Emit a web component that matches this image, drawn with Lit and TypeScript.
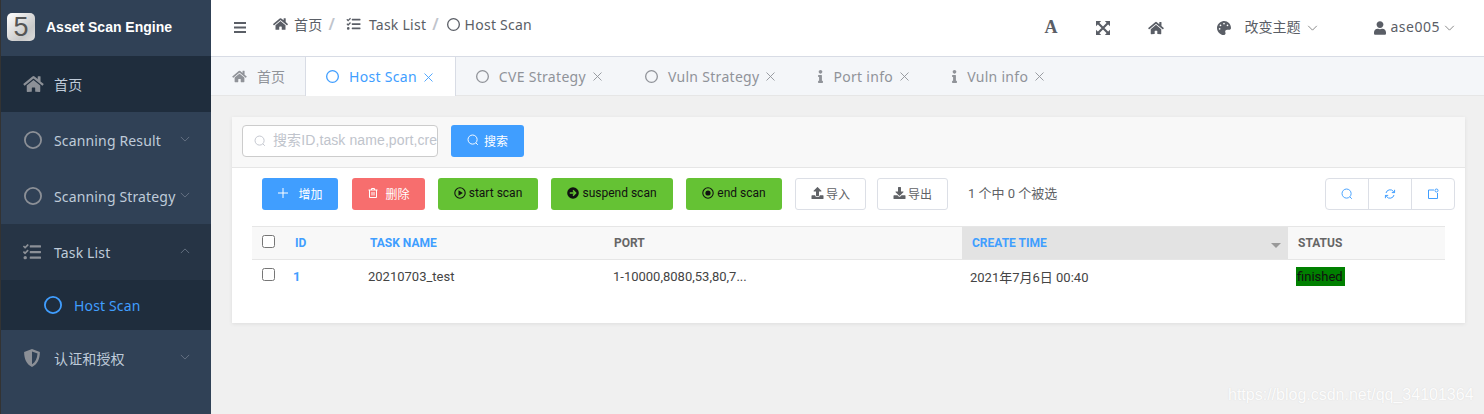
import { LitElement, css, html } from "lit";
import { customElement } from "lit/decorators.js";

const P = {
  home: "M280.37 148.26L96 300.11V464a16 16 0 0 0 16 16l112.06-.29a16 16 0 0 0 15.92-16V368a16 16 0 0 1 16-16h64a16 16 0 0 1 16 16v95.64a16 16 0 0 0 16 16.05L464 480a16 16 0 0 0 16-16V300L295.67 148.26a12.19 12.19 0 0 0-15.3 0zM571.6 251.47L488 182.56V44.05a12 12 0 0 0-12-12h-56a12 12 0 0 0-12 12v72.61L318.47 43a48 48 0 0 0-61 0L4.34 251.47a12 12 0 0 0-1.6 16.9l25.5 31A12 12 0 0 0 45.15 301l235.22-193.74a12.19 12.19 0 0 1 15.3 0L530.9 301a12 12 0 0 0 16.9-1.6l25.5-31a12 12 0 0 0-1.7-16.93z",
  tasks: "M139.61 35.5a12 12 0 0 0-17 0L58.93 98.81l-22.7-22.12a12 12 0 0 0-17 0L3.53 92.41a12 12 0 0 0 0 17l47.59 47.4a12.78 12.78 0 0 0 17.61 0l15.59-15.62L156.52 69a12.09 12.09 0 0 0 .09-17zm0 159.19a12 12 0 0 0-17 0l-63.68 63.72-22.7-22.1a12 12 0 0 0-17 0L3.53 252a12 12 0 0 0 0 17L51 316.5a12.77 12.77 0 0 0 17.6 0l15.7-15.69 72.2-72.22a12 12 0 0 0 .09-16.9zM64 368c-26.49 0-48.59 21.5-48.59 48S37.53 464 64 464a48 48 0 0 0 0-96zm432 16H208a16 16 0 0 0-16 16v32a16 16 0 0 0 16 16h288a16 16 0 0 0 16-16v-32a16 16 0 0 0-16-16zm0-320H208a16 16 0 0 0-16 16v32a16 16 0 0 0 16 16h288a16 16 0 0 0 16-16V80a16 16 0 0 0-16-16zm0 160H208a16 16 0 0 0-16 16v32a16 16 0 0 0 16 16h288a16 16 0 0 0 16-16v-32a16 16 0 0 0-16-16z",
  palette: "M204.3 5C104.9 24.4 24.8 104.3 5.2 203.4c-37 187 131.7 326.4 258.8 306.7 41.2-6.4 61.4-54.6 42.5-91.7-23.1-45.4 9.9-98.4 60.9-98.4h79.7c35.8 0 64.8-29.6 64.9-65.3C511.5 97.1 368.1-26.9 204.3 5zM96 320c-17.7 0-32-14.3-32-32s14.3-32 32-32 32 14.3 32 32-14.3 32-32 32zm32-128c-17.7 0-32-14.3-32-32s14.3-32 32-32 32 14.3 32 32-14.3 32-32 32zm128-64c-17.7 0-32-14.3-32-32s14.3-32 32-32 32 14.3 32 32-14.3 32-32 32zm128 64c-17.7 0-32-14.3-32-32s14.3-32 32-32 32 14.3 32 32-14.3 32-32 32z",
  user: "M224 256c70.7 0 128-57.3 128-128S294.7 0 224 0 96 57.3 96 128s57.3 128 128 128zm89.6 32h-16.7c-22.2 10.2-46.9 16-72.9 16s-50.6-5.8-72.9-16h-16.7C60.2 288 0 348.2 0 422.4V464c0 26.5 21.5 48 48 48h352c26.5 0 48-21.5 48-48v-41.6c0-74.2-60.2-134.4-134.4-134.4z",
  info: "M20 424.229h20V279.771H20c-11.046 0-20-8.954-20-20V212c0-11.046 8.954-20 20-20h112c11.046 0 20 8.954 20 20v212.229h20c11.046 0 20 8.954 20 20V492c0 11.046-8.954 20-20 20H20c-11.046 0-20-8.954-20-20v-47.771c0-11.046 8.954-20 20-20zM96 0C56.235 0 24 32.235 24 72s32.235 72 72 72 72-32.235 72-72S135.764 0 96 0z",
  upload: "M296 384h-80c-13.3 0-24-10.7-24-24V192h-87.7c-17.8 0-26.7-21.5-14.1-34.1L242.3 5.7c7.5-7.5 19.8-7.5 27.3 0l152.2 152.2c12.6 12.6 3.7 34.1-14.1 34.1H320v168c0 13.3-10.7 24-24 24zm216-8v112c0 13.3-10.7 24-24 24H24c-13.3 0-24-10.7-24-24V376c0-13.3 10.7-24 24-24h136v8c0 30.9 25.1 56 56 56h80c30.9 0 56-25.1 56-56v-8h136c13.3 0 24 10.7 24 24z",
  download: "M216 0h80c13.3 0 24 10.7 24 24v168h87.7c17.8 0 26.7 21.5 14.1 34.1L269.7 378.3c-7.5 7.5-19.8 7.5-27.3 0L90.1 226.1c-12.6-12.6-3.7-34.1 14.1-34.1H192V24c0-13.3 10.7-24 24-24zm296 376v112c0 13.3-10.7 24-24 24H24c-13.3 0-24-10.7-24-24V376c0-13.3 10.7-24 24-24h146.7l49 49c20.1 20.1 52.5 20.1 72.6 0l49-49H488c13.3 0 24 10.7 24 24z",
  shield: "M8 0 15 2.6C15 8.5 13 13.4 8 16 3 13.4 1 8.5 1 2.6zM8 2.2V13.6C11 11.6 12.6 8.6 12.9 4z",
};

const fa = (d: string, vb: string, cls: string) =>
  html`<svg class="fa ${cls}" viewBox=${vb} fill="currentColor"><path d=${d}></path></svg>`;
const home = (cls: string) => fa(P.home, "0 0 576 512", cls);
const tasks = (cls: string) => fa(P.tasks, "0 0 512 512", cls);
const ring = (cls: string) =>
  html`<svg class="fa ${cls}" viewBox="0 0 14 14" fill="none" stroke="currentColor" stroke-width="1.4"><circle cx="7" cy="7" r="6.3"></circle></svg>`;
const info = (cls: string) => fa(P.info, "0 0 192 512", cls);
const chevron = (up = false) =>
  html`<svg class="chev" viewBox="0 0 12 7" fill="none" stroke="currentColor" stroke-width="1"><path d=${up ? "M1 6 6 1l5 5" : "M1 1l5 5 5-5"}></path></svg>`;
const search = (cls: string) =>
  html`<svg class=${cls} viewBox="0 0 14 14" fill="none" stroke="currentColor" stroke-width="1.1"><circle cx="6.5" cy="6.5" r="5.3"></circle><path d="M10.4 10.4 12.6 12.6"></path></svg>`;

@customElement("app-root")
export class AppRoot extends LitElement {
  static styles = css`
    :host {
      display: flex;
      height: 100vh;
      min-height: 414px;
      overflow: hidden;
      background: #f0f0f0;
      font-family: "Noto Sans", "Noto Sans CJK SC", sans-serif;
      font-size: 14px;
      color: #606266;
    }
    svg { display: block; flex: none; }

    /* sidebar */
    .side {
      width: 210px;
      flex: none;
      background: #304156;
      border-left: 1px solid #333;
      color: #bfcbd9;
      letter-spacing: 0.15px;
    }
    .logo { height: 54px; padding-bottom: 2px; display: flex; align-items: center; padding-left: 6px; gap: 11px; }
    .logo-mark {
      width: 28px;
      height: 28px;
      border-radius: 5px;
      background: linear-gradient(135deg, #fff, #c9c9c9 70%, #ddd);
      color: #555;
      font: 27px/28px "Liberation Sans", sans-serif;
      text-align: center;
    }
    .logo-title { font: bold 14px "Liberation Sans", sans-serif; color: #fff; letter-spacing: 0; }
    .item { height: 56px; display: flex; align-items: center; position: relative; padding-left: 53px; }
    .item .lead { position: absolute; left: 22px; top: 50%; margin-top: -9px; color: #8c9097; }
    .item .chev { position: absolute; left: 179px; top: 24px; width: 10px; height: 6px; color: #6d7a8a; }
    .item.dark { background: #1f2d3d; }
    .item.open { background: #263445; }
    .item.sub { height: 50px; background: #1f2d3d; color: #409eff; padding-left: 73px; }
    .item.sub .lead { left: 43px; color: #409eff; }
    .i18 { width: 18px; height: 18px; }
    .home-lead { width: 21px; height: 18px; }
    .item .ring-lead { width: 18px; height: 18px; left: 23px; }

    /* right side */
    .body { flex: 1; min-width: 0; display: flex; flex-direction: column; }
    .top {
      height: 56px;
      background: #fff;
      border-bottom: 1px solid #d8dce5;
      display: flex;
      align-items: center;
      padding-left: 23px;
      color: #5a5e66;
    }
    .burger { width: 12px; height: 11px; margin-right: 27px; margin-bottom: 2px; color: #5a5e66; }
    .crumbs { display: flex; align-items: center; margin-top: -8px; }
    .crumbs .fa { height: 14px; width: 15px; }
    .crumbs .ring-c { width: 13px; height: 13px; }
    .crumbs .sep { color: #c0c4cc; font-weight: 600; font-size: 16px; }
    .crumbs .sep1 { margin: 0 11px 0 6px; }
    .crumbs .sep2 { margin: 0 8px 0 6px; }
    .crumbs .t { margin-left: 6px; letter-spacing: 0.25px; }
    .crumbs .t-task { margin-left: 8px; }
    .crumbs .t-host { margin-left: 5px; }
    .tools { margin-left: auto; display: flex; align-items: center; color: #5a5e66; }
    .tool-a { font: bold 18px "Liberation Serif", serif; width: 13px; text-align: center; margin-right: 38px; margin-bottom: 2px; }
    .tool-x { width: 14px; height: 14px; margin-right: 38px; }
    .tool-h { width: 16px; height: 14px; margin-right: 53px; }
    .tool-p { width: 14px; height: 14px; margin-right: 14px; }
    .tools .chev { width: 11px; height: 6px; color: #777; margin-left: 6px; }
    .theme { font-size: 14px; margin-top: -5px; }
    .tool-u { width: 12px; height: 14px; margin-left: 56px; margin-right: 5px; }
    .name { font-size: 14px; margin-top: -3px; letter-spacing: 0.5px; }
    .tools .last { margin-right: 29px; margin-left: 4px; }

    .tabs {
      height: 38px;
      background: #f4f6f9;
      border-bottom: 1px solid #e6e6e6;
      display: flex;
      color: #909399;
      letter-spacing: 0.3px;
    }
    .tab { display: flex; align-items: center; padding: 0 23px 0 20px; position: relative; }
    .tab.first { padding: 0 20px 0 21px; letter-spacing: 0; }
    .tab .fa { width: 13px; height: 13px; margin-right: 10px; }
    .tab .home-i { width: 15px; height: 13px; margin-right: 10px; }
    .tab .info-i { width: 5px; height: 13px; margin-right: 10px; }
    .tab .x { width: 9px; height: 9px; margin-left: 7px; margin-top: 1px; }
    .tab.on {
      background: #fff;
      color: #409eff;
      height: 39px;
      padding-right: 22px;
      border-left: 1px solid #d8dce5;
      border-right: 1px solid #d8dce5;
    }

    .main { padding: 21px 19px 0 21px; }
    .card { background: #fff; box-shadow: 0 1px 4px rgba(0, 0, 0, 0.08); padding-bottom: 30px; }
    .search-row {
      height: 48px;
      padding-bottom: 2px;
      background: #f8f8f8;
      border-bottom: 1px solid #e6e6e6;
      display: flex;
      align-items: center;
      padding-left: 10px;
      gap: 13px;
    }
    .input {
      width: 196px;
      height: 32px;
      box-sizing: border-box;
      background: #fff;
      border: 1px solid #ccc;
      border-radius: 4px;
      display: flex;
      align-items: center;
      padding: 0 0 5px 11px;
      gap: 7px;
      color: #c0c4cc;
      overflow: hidden;
      white-space: nowrap;
      font-family: "Liberation Sans", "Noto Sans CJK SC", sans-serif;
      letter-spacing: 0.1px;
    }
    .input .s12 { margin-top: 5px; }
    .s12 { width: 12px; height: 12px; flex: none; display: block; }
    .btn {
      height: 32px;
      box-sizing: border-box;
      padding-bottom: 2px;
      border-radius: 3px;
      display: flex;
      align-items: center;
      justify-content: center;
      font: 12px "Roboto", "Noto Sans CJK SC", sans-serif;
      flex: none;
    }
    .blue { background: #409eff; color: #fff; }
    .red { background: #f76e6e; color: #fff; margin-left: 1px; }
    .green { background: #65c234; color: #111; }
    .plain { background: #fff; border: 1px solid #dcdfe6; color: #606266; }
    .w-search { width: 73px; gap: 5px; }
    .w-add { width: 76px; gap: 9px; }
    .w-del { width: 73px; gap: 6px; }
    .w-start { width: 100px; gap: 3px; }
    .w-susp { width: 122px; gap: 3px; }
    .w-end { width: 96px; gap: 3px; }
    .w-imp { width: 71px; gap: 2px; }
    .exp { margin-left: -2px; }
    .i13 { width: 13px; height: 12px; }
    .tool-row {
      height: 32px;
      padding: 10px 10px 16px 30px;
      display: flex;
      align-items: center;
      gap: 13px;
    }
    .count { font: 13px "Roboto", "Noto Sans CJK SC", sans-serif; margin: -3px 0 0 7px; color: #606266; }
    .group {
      margin-left: auto;
      display: flex;
      width: 130px;
      height: 32px;
      box-sizing: border-box;
      border: 1px solid #dcdfe6;
      border-radius: 4px;
      color: #409eff;
    }
    .group div { flex: 1; display: flex; align-items: center; justify-content: center; }
    .group div + div { border-left: 1px solid #dcdfe6; }

    table {
      width: 1193px;
      margin-left: 20px;
      border-collapse: collapse;
      table-layout: fixed;
      font: 13px "Roboto", "Noto Sans CJK SC", sans-serif;
      color: #444;
    }
    th {
      height: 33px;
      box-sizing: border-box;
      padding: 0 10px;
      background: #f8f8f8;
      border-top: 1px solid #e6e6e6;
      border-bottom: 1px solid #e6e6e6;
      text-align: left;
      font-size: 12px;
      font-weight: 700;
      color: #666;
      position: relative;
    }
    th.link { color: #409eff; }
    th.sorted { background: #e3e3e3; }
    td { height: 33px; padding: 0 8px; box-sizing: border-box; vertical-align: middle; }
    input { margin: 0 0 4px 10px; display: block; }
    td.id { color: #409eff; font-weight: 700; }
    td.port { padding-left: 9px; }
    .caret {
      position: absolute;
      right: 7px;
      bottom: 11px;
      border: 5px solid transparent;
      border-top-color: #999;
      border-bottom: 0;
    }
    .status { display: inline-block; background: #008000; color: #111; padding: 0 1px; line-height: 19px; width: 49px; box-sizing: border-box; }
    .mark {
      position: absolute;
      left: 1228px;
      top: 386px;
      font: 16px "Liberation Sans", sans-serif;
      color: rgba(255, 255, 255, 0.95);
      text-shadow: 0 0 1px rgba(190, 190, 190, 0.5);
      white-space: nowrap;
    }
  `;

  tab(icon: unknown, label: string, cls = "", closable = true) {
    return html`<div class="tab ${cls}">
      ${icon}<span>${label}</span>
      ${closable
        ? html`<svg class="x" viewBox="0 0 9 9" fill="none" stroke="currentColor" stroke-width="0.9"><path d="M.5.5l8 8M8.5.5l-8 8"></path></svg>`
        : ""}
    </div>`;
  }

  render() {
    return html`
      <aside class="side">
        <div class="logo"><div class="logo-mark">5</div><div class="logo-title">Asset Scan Engine</div></div>
        <div class="item dark">${home("lead home-lead")}首页</div>
        <div class="item">${ring("lead ring-lead")}Scanning Result${chevron()}</div>
        <div class="item">${ring("lead ring-lead")}Scanning Strategy${chevron()}</div>
        <div class="item open">${tasks("lead i18")}Task List${chevron(true)}</div>
        <div class="item sub">${ring("lead ring-lead")}Host Scan</div>
        <div class="item">${fa(P.shield, "0 0 16 16", "lead i18")}认证和授权${chevron()}</div>
      </aside>

      <div class="body">
        <header class="top">
          <svg class="burger" viewBox="0 0 12 11" fill="currentColor"><rect width="12" height="2"></rect><rect y="4.5" width="12" height="2"></rect><rect y="9" width="12" height="2"></rect></svg>
          <nav class="crumbs">
            ${home("")}<span class="t">首页</span><span class="sep sep1">/</span>
            ${tasks("")}<span class="t t-task">Task List</span><span class="sep sep2">/</span>
            ${ring("ring-c")}<span class="t t-host">Host Scan</span>
          </nav>
          <div class="tools">
            <span class="tool-a">A</span>
            <svg class="tool-x" viewBox="0 0 14 14">
              <path d="M0 0h5.2L0 5.2zM14 0v5.2L8.8 0zM0 14V8.8L5.2 14zM14 14H8.8L14 8.8z" fill="currentColor"></path>
              <path d="M2 2l10 10M12 2 2 12" stroke="currentColor" stroke-width="2.2"></path>
            </svg>
            ${home("tool-h")}
            ${fa(P.palette, "0 0 512 512", "tool-p")}
            <span class="theme">改变主题</span>${chevron()}
            ${fa(P.user, "0 0 448 512", "tool-u")}
            <span class="name">ase005</span>
            <svg class="chev last" viewBox="0 0 12 7" fill="none" stroke="currentColor" stroke-width="1"><path d="M1 1l5 5 5-5"></path></svg>
          </div>
        </header>

        <div class="tabs">
          ${this.tab(home("home-i"), "首页", "first", false)}
          ${this.tab(ring(""), "Host Scan", "on")}
          ${this.tab(ring(""), "CVE Strategy")}
          ${this.tab(ring(""), "Vuln Strategy")}
          ${this.tab(info("info-i"), "Port info")}
          ${this.tab(info("info-i"), "Vuln info")}
        </div>

        <main class="main">
          <section class="card">
            <div class="search-row">
              <div class="input">${search("s12")}<span>搜索ID,task name,port,cre</span></div>
              <div class="btn blue w-search">${search("s12")}搜索</div>
            </div>
            <div class="tool-row">
              <div class="btn blue w-add">
                <svg class="s12" viewBox="0 0 12 12" fill="none" stroke="currentColor"><path d="M6 1v10M1 6h10"></path></svg>增加
              </div>
              <div class="btn red w-del">
                <svg class="s12" viewBox="0 0 12 12" fill="none" stroke="currentColor"><path d="M1.5 3h9M4.5 3V1.5h3V3M2.5 3v7.5h7V3M5 5v3.5M7 5v3.5"></path></svg>删除
              </div>
              <div class="btn green w-start">
                <svg class="s12" viewBox="0 0 12 12"><circle cx="6" cy="6" r="5.2" fill="none" stroke="#111" stroke-width="1.1"></circle><path d="M4.5 3.3 8.8 6 4.5 8.7z" fill="#111"></path></svg>start scan
              </div>
              <div class="btn green w-susp">
                <svg class="s12" viewBox="0 0 12 12"><circle cx="6" cy="6" r="5.8" fill="#111"></circle><path d="M2.8 6h5.4M6 3.4 8.6 6 6 8.6" fill="none" stroke="#65c234" stroke-width="1.5"></path></svg>suspend scan
              </div>
              <div class="btn green w-end">
                <svg class="s12" viewBox="0 0 12 12"><circle cx="6" cy="6" r="5.2" fill="none" stroke="#111" stroke-width="1.1"></circle><circle cx="6" cy="6" r="2.6" fill="#111"></circle></svg>end scan
              </div>
              <div class="btn plain w-imp">${fa(P.upload, "0 0 512 512", "i13")}导入</div>
              <div class="btn plain w-imp exp">${fa(P.download, "0 0 512 512", "i13")}导出</div>
              <span class="count">1 个中 0 个被选</span>
              <div class="group">
                <div>${search("s12")}</div>
                <div>
                  <svg class="s12" viewBox="0 0 12 12" fill="none" stroke="currentColor"><path d="M2 5a4.2 4.2 0 0 1 7.4-1.6L10.6 4.6M10 7a4.2 4.2 0 0 1-7.4 1.6L1.4 7.4"></path><path d="M10.6 1.8v2.8H7.8M1.4 10.2V7.4h2.8"></path></svg>
                </div>
                <div>
                  <svg class="s12" viewBox="0 0 12 12" fill="none" stroke="currentColor"><path d="M7 2H1.5v8.5H10.5V5"></path><circle cx="9.5" cy="2.5" r="1.5"></circle></svg>
                </div>
              </div>
            </div>
            <table>
              <colgroup>
                <col style="width:33px" /><col style="width:75px" /><col style="width:244px" />
                <col style="width:358px" /><col style="width:326px" /><col style="width:157px" />
              </colgroup>
              <thead>
                <tr>
                  <th style="padding:0"><input type="checkbox" /></th>
                  <th class="link">ID</th>
                  <th class="link">TASK NAME</th>
                  <th>PORT</th>
                  <th class="link sorted">CREATE TIME<span class="caret"></span></th>
                  <th>STATUS</th>
                </tr>
              </thead>
              <tbody>
                <tr>
                  <td style="padding:0"><input type="checkbox" /></td>
                  <td class="id">1</td>
                  <td>20210703_test</td>
                  <td class="port">1-10000,8080,53,80,7...</td>
                  <td>2021年7月6日 00:40</td>
                  <td><span class="status">finished</span></td>
                </tr>
              </tbody>
            </table>
          </section>
        </main>
      </div>
      <div class="mark">https://blog.csdn.net/qq_34101364</div>
    `;
  }
}
